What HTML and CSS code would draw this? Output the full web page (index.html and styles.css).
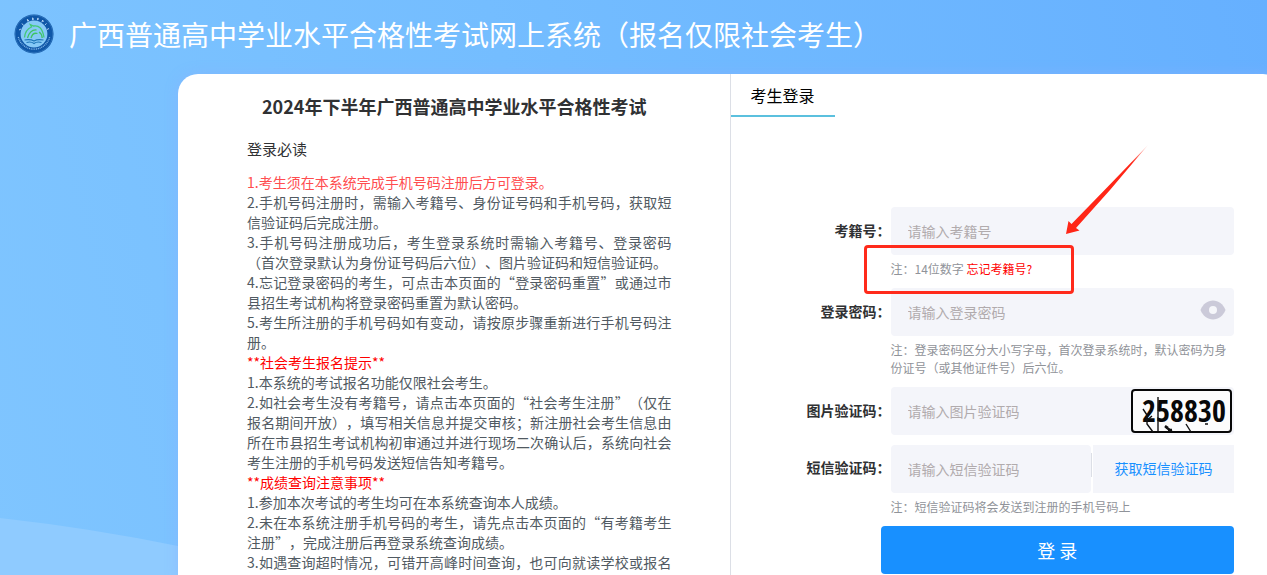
FILE: index.html
```html
<!DOCTYPE html>
<html lang="zh-CN">
<head>
<meta charset="utf-8">
<meta name="viewport" content="width=device-width, initial-scale=1">
<title>广西普通高中学业水平合格性考试网上系统</title>
<link rel="stylesheet" href="styles.css">
</head>
<body>
<svg class="backdrop" viewBox="0 0 1267 575" preserveAspectRatio="none" aria-hidden="true">
  <path d="M0 518Q90 528 178 546L400 600H0z" fill="#8fcbff"/>
</svg>
<header class="header">
  <svg class="logo" viewBox="0 0 40 40" aria-hidden="true">
    <circle cx="20" cy="20" r="19.5" fill="#0f57a8"/>
    <circle cx="20" cy="20" r="18.8" fill="none" stroke="#3f83c6" stroke-width=".6"/>
    <circle cx="20" cy="20" r="13.4" fill="#86c9f7"/>
    <path d="M5 16l2-1M8 9.500l1.500 2M13.200 5l1 2.300M13 7l2-.8M18.600 3.600l.2 2.600M18 5h2M24 3.800l-.5 2.400M23 5h2M29 6l-1.200 2.200M28 6.500l1.700 1M32.500 9.500l-1.700 1.500M35 14.500l-2 1" stroke="#c3e0fa" stroke-width=".9" fill="none"/>
    <path d="M4.300 23a16.200 16.200 0 0 0 31.400 0" fill="none" stroke="#8abdec" stroke-width="1.300" stroke-dasharray="1 .8"/>
    <path d="M10.500 23.500c.5-6 3.500-9 7-10.500l-1.200-2.500 3.200 1.500c5-1 9 2 10.500 11.500" fill="none" stroke="#43c877" stroke-width="1.300"/>
    <path d="M13.500 24c1.500-5 4.500-8.500 9-8M17 24c1-3.500 3-5.500 6.500-4.500M25 18c2.500 1.500 3 3.500 3.200 6" fill="none" stroke="#3fc463" stroke-width="1.300"/>
    <path d="M10.500 26c4-.8 7-.5 9.500 1 2.500-1.500 5.500-1.800 9.500-1M12.500 28.500c3-.8 5.500-.5 7.500 1 2-1.500 4.500-1.800 7.500-1" fill="none" stroke="#1e76b8" stroke-width="1.100"/>
  </svg>
  <h1 class="header-title">广西普通高中学业水平合格性考试网上系统（报名仅限社会考生）</h1>
</header>
<main class="card">
  <section class="notice">
    <h2 class="notice-title">2024年下半年广西普通高中学业水平合格性考试</h2>
    <h3 class="notice-subtitle">登录必读</h3>
    <div class="notice-body">
      <p class="alert">1.考生须在本系统完成手机号码注册后方可登录。</p>
      <p>2.手机号码注册时，需输入考籍号、身份证号码和手机号码，获取短信验证码后完成注册。</p>
      <p>3.手机号码注册成功后，考生登录系统时需输入考籍号、登录密码（首次登录默认为身份证号码后六位）、图片验证码和短信验证码。</p>
      <p>4.忘记登录密码的考生，可点击本页面的“登录密码重置”或通过市县招生考试机构将登录密码重置为默认密码。</p>
      <p>5.考生所注册的手机号码如有变动，请按原步骤重新进行手机号码注册。</p>
      <p class="group">**社会考生报名提示**</p>
      <p>1.本系统的考试报名功能仅限社会考生。</p>
      <p>2.如社会考生没有考籍号，请点击本页面的“社会考生注册”（仅在报名期间开放），填写相关信息并提交审核；新注册社会考生信息由所在市县招生考试机构初审通过并进行现场二次确认后，系统向社会考生注册的手机号码发送短信告知考籍号。</p>
      <p class="group">**成绩查询注意事项**</p>
      <p>1.参加本次考试的考生均可在本系统查询本人成绩。</p>
      <p>2.未在本系统注册手机号码的考生，请先点击本页面的“有考籍考生注册”，完成注册后再登录系统查询成绩。</p>
      <p class="last">3.如遇查询超时情况，可错开高峰时间查询，也可向就读学校或报名</p>
    </div>
  </section>
  <section class="login">
    <nav class="tabs"><a class="tab" href="#login">考生登录</a></nav>
    <form class="form" id="login">
      <div class="row">
        <label class="label" for="exam-id">考籍号：</label>
        <div class="field">
          <div class="box"><input class="input" id="exam-id" type="text" placeholder="请输入考籍号"></div>
          <p class="hint">注：14位数字 <a class="forgot" href="#forgot">忘记考籍号?</a></p>
          <div class="callout"></div>
          <svg class="arrow" viewBox="0 0 84 90" aria-hidden="true">
            <defs><linearGradient id="fade" x1="1" y1="0" x2="0" y2="1"><stop offset="0" stop-color="#ff2617" stop-opacity=".2"/><stop offset=".2" stop-color="#ff2617"/></linearGradient></defs>
            <path d="M83 0L45 45 11 83 14.500 85.500 1 89 3.500 76 6.500 79 42.500 42z" fill="url(#fade)"/>
          </svg>
        </div>
      </div>
      <div class="row">
        <label class="label" for="password">登录密码：</label>
        <div class="field">
          <div class="box">
            <input class="input" id="password" type="password" placeholder="请输入登录密码">
            <button class="reveal" type="button" aria-label="显示密码">
              <svg class="eye" viewBox="0 0 26 20" aria-hidden="true"><path d="M0.500 10C3 4 7.500.5 13 .5S23 4 25.500 10C23 16 18.500 19.500 13 19.500S3 16 .5 10z" fill="#cbcad9"/><circle cx="13" cy="10" r="4" fill="#f5f6fa"/></svg>
            </button>
          </div>
          <p class="hint">注：登录密码区分大小写字母，首次登录系统时，默认密码为身份证号（或其他证件号）后六位。</p>
        </div>
      </div>
      <div class="row">
        <label class="label" for="captcha">图片验证码：</label>
        <div class="field">
          <div class="box">
            <input class="input" id="captcha" type="text" placeholder="请输入图片验证码">
            <svg class="captcha" viewBox="0 0 101 44" role="img" aria-label="258830">
              <rect x="1" y="1" width="99" height="42" rx="3" fill="#fcfcfc" stroke="#080808" stroke-width="2"/>
              <text class="captcha-text" x="18 32 46 60 74 88" y="33" text-anchor="middle">258830</text>
              <path d="M12 20l4 6v9l6 8M21 27l-6 5M27 8v34M34 38l5 4M37 39l4 3M55 35l5 8M74 35h3" fill="none" stroke="#111" stroke-width="1.400"/>
              <path d="M34 37l3 2M37 41h4" fill="none" stroke="#111" stroke-width="2.500"/>
            </svg>
          </div>
        </div>
      </div>
      <div class="row">
        <label class="label" for="sms">短信验证码：</label>
        <div class="field">
          <div class="sms">
            <div class="box"><input class="input" id="sms" type="text" placeholder="请输入短信验证码"></div>
            <span class="rule"></span>
            <button class="send" type="button">获取短信验证码</button>
          </div>
          <p class="hint">注：短信验证码将会发送到注册的手机号码上</p>
        </div>
      </div>
      <button class="submit" type="submit">登 录</button>
    </form>
  </section>
</main>
</body>
</html>
```
FILE: styles.css
```css
* {
  box-sizing: border-box;
}

body {
  margin: 0;
  min-height: 100vh;
  overflow: hidden;
  background: linear-gradient(75deg, #7fc5ff, #74bdff 45%, #66b0ff);
  font-family: "Noto Sans CJK SC", sans-serif;
  font-size: 14px;
  line-height: 20px;
  color: #303133;
  text-spacing-trim: space-all;
}

h1,
h2,
h3,
p {
  margin: 0;
}

a {
  text-decoration: none;
}

button,
input {
  border: 0;
  padding: 0;
  font: inherit;
}

.backdrop {
  position: absolute;
  inset: 0;
  z-index: -1;
  width: 100%;
  height: 100vh;
}

.header {
  display: flex;
  align-items: center;
  gap: 15px;
  height: 74px;
  padding: 0 14px 6px;
}

.logo {
  flex: none;
  width: 40px;
  height: 40px;
}

.header-title {
  font-size: 28px;
  font-weight: 400;
  line-height: 40px;
  color: #fff;
  white-space: nowrap;
}

.card {
  display: flex;
  min-height: calc(100vh - 74px);
  margin: 0 -16px 0 178px;
  border-radius: 20px 20px 0 0;
  background: #fff;
  box-shadow: 0 0 12px rgba(140, 175, 255, 0.5);
}

.notice {
  flex: none;
  width: 50%;
  padding: 19px 58px 0 69px;
  border-right: 1px solid #dcdfe6;
}

.notice-title {
  margin-bottom: 20px;
  padding-right: 10px;
  font-size: 18px;
  line-height: 26px;
  text-align: center;
  white-space: nowrap;
}

.notice-subtitle {
  margin-bottom: 13px;
  font-size: 15px;
  font-weight: 400;
  line-height: 20px;
}

.notice-body {
  color: #515a62;
  text-align: justify;
}

.last {
  text-align-last: justify;
}

.alert {
  color: #ff4d4f;
}

.group {
  color: #f00;
}

.login {
  flex: 1;
  min-width: 0;
}

.tabs {
  display: flex;
}

.tab {
  padding: 9px 20px 8px;
  border-bottom: 2px solid #5bc0de;
  font-size: 16px;
  line-height: 24px;
  color: #000;
}

.form {
  display: flex;
  flex-direction: column;
  gap: 9px;
  padding: 90px 49px 1px 0;
}

.row {
  display: flex;
}

.label {
  flex: none;
  width: 160px;
  font-weight: 700;
  line-height: 46px;
  text-align: right;
}

.field {
  position: relative;
  flex: 1;
  min-width: 0;
}

.box {
  display: flex;
  flex: 1;
  align-items: center;
  height: 48px;
  padding-right: 2px;
  border-radius: 4px;
  background: #f4f5fa;
}

.input {
  flex: 1;
  min-width: 0;
  height: 48px;
  padding: 0 0 0 17px;
  background: transparent;
  color: #303133;
}

.input::placeholder {
  color: #b1abad;
}

.hint {
  padding: 5px 0 1px;
  font-size: 12px;
  line-height: 18px;
  color: #909399;
}

.forgot {
  color: #f00;
}

.callout {
  position: absolute;
  z-index: 1;
  top: 38px;
  left: -27px;
  width: 210px;
  height: 49px;
  border: 3px solid #ff2a1b;
  border-radius: 4px;
}

.arrow {
  position: absolute;
  top: -62px;
  left: 174px;
  width: 84px;
  height: 90px;
}

.reveal {
  display: flex;
  padding: 0 6px 4px;
  background: none;
}

.eye {
  width: 26px;
  height: 20px;
}

.captcha {
  flex: none;
  width: 101px;
  height: 44px;
}

.captcha-text {
  font-family: "Liberation Sans Narrow", "Open Sans Condensed", sans-serif;
  font-size: 30px;
  fill: #080808;
}

.sms {
  display: flex;
  padding-top: 1px;
}

.rule {
  width: 1px;
  height: 24px;
  margin: 8px 1px 0 0;
  background: #dcdfe6;
}

.send {
  width: 141px;
  padding-bottom: 2px;
  background: #f4f5fa;
  color: #1890ff;
}

.submit {
  height: 48px;
  margin-left: 150px;
  border-radius: 4px;
  background: #1890ff;
  font-size: 18px;
  color: #fff;
}
```
